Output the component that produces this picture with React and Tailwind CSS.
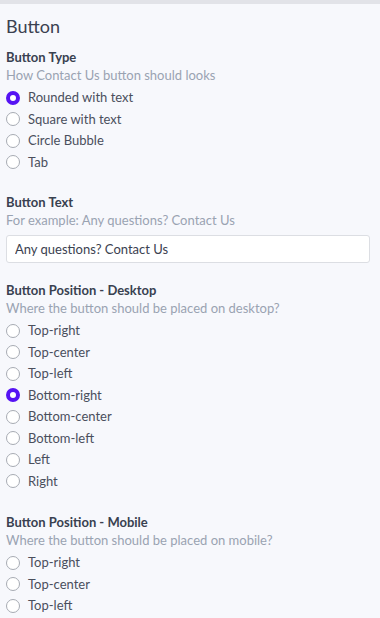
import React, { useState } from "react";

const desktopOptions = ["Top-right", "Top-center", "Top-left", "Bottom-right", "Bottom-center", "Bottom-left", "Left", "Right"];
const mobileOptions = ["Top-right", "Top-center", "Top-left"];
const typeOptions = ["Rounded with text", "Square with text", "Circle Bubble", "Tab"];

const Radio = ({ label, checked, onSelect }) => (
  <label className="flex items-center gap-2 h-[21.5px] cursor-pointer" onClick={onSelect}>
    {checked ? (
      <span className="w-[14px] h-[14px] rounded-full border-[4px] border-[#5613f3] bg-white shrink-0" />
    ) : (
      <span className="w-[14px] h-[14px] rounded-full border border-[#a7abb3] bg-white shrink-0" />
    )}
    <span className="text-[13px] text-[#4a4f5c]">{label}</span>
  </label>
);

const Field = ({ title, hint, children }) => (
  <div>
    <div className="text-[13px] font-bold text-[#394150] leading-[18px]">{title}</div>
    <div className="text-[13px] text-[#9aa3b2] leading-[18px] mb-[3px]">{hint}</div>
    {children}
  </div>
);

const App = () => {
  const [type, setType] = useState("Rounded with text");
  const [text, setText] = useState("Any questions? Contact Us");
  const [desktop, setDesktop] = useState("Bottom-right");
  const [mobile, setMobile] = useState("");

  return (
    <div className="min-h-screen bg-[#f7f8fc] border-t-4 border-[#e2e3e8] font-['Lato',sans-serif] px-[6px] pt-[10px]">
      <h2 className="text-[18px] text-[#3b4150] leading-[24px] mb-[10px]">Button</h2>

      <Field title="Button Type" hint="How Contact Us button should looks">
        {typeOptions.map((o) => (
          <Radio key={o} label={o} checked={type === o} onSelect={() => setType(o)} />
        ))}
      </Field>

      <div className="h-[20px]" />
      <Field title="Button Text" hint="For example: Any questions? Contact Us">
        <input
          value={text}
          onChange={(e) => setText(e.target.value)}
          className="mt-[3px] w-[364px] h-[28px] px-[8px] bg-white border border-[#dcdee3] rounded-[3px] text-[13px] text-[#3b4150] outline-none"
        />
      </Field>

      <div className="h-[18px]" />
      <Field title="Button Position - Desktop" hint="Where the button should be placed on desktop?">
        {desktopOptions.map((o) => (
          <Radio key={o} label={o} checked={desktop === o} onSelect={() => setDesktop(o)} />
        ))}
      </Field>

      <div className="h-[21px]" />
      <Field title="Button Position - Mobile" hint="Where the button should be placed on mobile?">
        {mobileOptions.map((o) => (
          <Radio key={o} label={o} checked={mobile === o} onSelect={() => setMobile(o)} />
        ))}
      </Field>
    </div>
  );
};

export default App;
